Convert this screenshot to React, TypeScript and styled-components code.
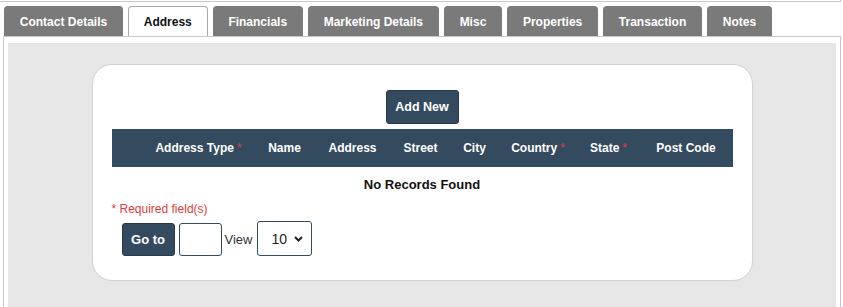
import styled, { createGlobalStyle } from "styled-components";

const Navy = "#344a5f";
const TabGrey = "#7a7a7a";
const LineGrey = "#c8c8c8";
const Red = "#e03c3c";

const GlobalStyle = createGlobalStyle`
  body {
    margin: 0;
    background: #fff;
    font-family: "Liberation Sans", Arial, sans-serif;
  }
`;

const tabs = [
  "Contact Details",
  "Address",
  "Financials",
  "Marketing Details",
  "Misc",
  "Properties",
  "Transaction",
  "Notes",
];

// widths of the grid columns, first one is an empty action column
const columns = [
  { label: "", width: 31 },
  { label: "Address Type", width: 112, required: true },
  { label: "Name", width: 60 },
  { label: "Address", width: 76 },
  { label: "Street", width: 60 },
  { label: "City", width: 48 },
  { label: "Country", width: 79, required: true },
  { label: "State", width: 62, required: true },
  { label: "Post Code", width: 93 },
];

const TopEdge = styled.div`
  width: 840px;
  height: 1px;
  border-bottom: 1px solid ${LineGrey};
  border-right: 1px solid ${LineGrey};
`;

const TabBar = styled.div`
  display: flex;
  gap: 5px;
  margin: 4px 0 0 4px;
  height: 30px;
`;

const Tab = styled.div<{ $active?: boolean }>`
  display: flex;
  align-items: center;
  padding: 0 14.8px;
  border: 1px solid ${(p) => (p.$active ? "#a8a8a8" : TabGrey)};
  border-bottom: none;
  border-radius: 4px 4px 0 0;
  background: ${(p) => (p.$active ? "#fff" : TabGrey)};
  color: ${(p) => (p.$active ? "#111" : "#fff")};
  font-size: 12px;
  font-weight: bold;
  white-space: nowrap;
`;

const Panel = styled.div`
  margin-left: 3px;
  width: 838px;
  border: 1px solid ${LineGrey};
  border-bottom: none;
  padding: 6px 4px 0;
  box-sizing: border-box;
`;

const GreyArea = styled.div`
  background: #e6e6e6;
  padding: 21px 0 26px;
  min-height: 250px;
  box-sizing: border-box;
`;

const Card = styled.div`
  width: 661px;
  margin: 0 auto;
  background: #fff;
  border: 1px solid #d2d2d2;
  border-radius: 20px;
  padding: 25px 19px 24px;
  box-sizing: border-box;
  display: flex;
  flex-direction: column;
`;

const Button = styled.button`
  background: ${Navy};
  color: #fff;
  border: 1px solid #263849;
  border-radius: 3px;
  font-family: "Liberation Sans", Arial, sans-serif;
  font-weight: bold;
  font-size: 12px;
  cursor: pointer;
  padding: 0;
`;

const AddButton = styled(Button)`
  align-self: center;
  width: 73px;
  height: 34px;
  font-size: 12.5px;
`;

const Table = styled.div`
  margin-top: 5px;
  display: grid;
  grid-template-columns: ${columns.map((c) => `${c.width}px`).join(" ")};
`;

const HeadCell = styled.div`
  background: ${Navy};
  color: #fff;
  height: 38px;
  display: flex;
  align-items: center;
  justify-content: center;
  font-size: 12px;
  font-weight: bold;
  white-space: nowrap;
`;

const Star = styled.span`
  color: ${Red};
  font-weight: normal;
  margin-left: 3px;
`;

const EmptyRow = styled.div`
  grid-column: 1 / -1;
  height: 34px;
  display: flex;
  align-items: center;
  justify-content: center;
  font-size: 13px;
  font-weight: bold;
  color: #111;
`;

const Required = styled.div`
  color: ${Red};
  font-size: 12px;
  margin-top: 1px;
  line-height: 14px;
`;

const Pager = styled.div`
  display: flex;
  align-items: flex-start;
  gap: 4px;
  margin: 5px 0 0 10px;
`;

const GoButton = styled(Button)`
  width: 53px;
  height: 33px;
  font-size: 13px;
  margin-top: 2px;
`;

const PageInput = styled.input`
  width: 43px;
  height: 33px;
  box-sizing: border-box;
  border: 1px solid ${Navy};
  border-radius: 3px;
  margin: 2px 0 0;
`;

const ViewLabel = styled.span`
  align-self: center;
  font-size: 13px;
  color: #333;
  margin: 2px 1px 0 -1px;
`;

const SelectWrap = styled.div`
  position: relative;
  width: 55px;
  height: 35px;
`;

const Select = styled.select`
  appearance: none;
  width: 100%;
  height: 100%;
  border: 1px solid ${Navy};
  border-radius: 3px;
  background: #fff;
  font-family: "Liberation Sans", Arial, sans-serif;
  font-size: 14px;
  color: #222;
  padding: 0 0 0 13px;
`;

const Chevron = styled.svg`
  position: absolute;
  right: 9px;
  top: 15px;
  pointer-events: none;
`;

function App() {
  return (
    <>
      <GlobalStyle />
      <TopEdge />
      <TabBar>
        {tabs.map((t) => (
          <Tab key={t} $active={t === "Address"}>
            {t}
          </Tab>
        ))}
      </TabBar>
      <Panel>
        <GreyArea>
          <Card>
            <AddButton>Add New</AddButton>
            <Table>
              {columns.map((c, i) => (
                <HeadCell key={i}>
                  {c.label}
                  {c.required && <Star>*</Star>}
                </HeadCell>
              ))}
              <EmptyRow>No Records Found</EmptyRow>
            </Table>
            <Required>* Required field(s)</Required>
            <Pager>
              <GoButton>Go to</GoButton>
              <PageInput />
              <ViewLabel>View</ViewLabel>
              <SelectWrap>
                <Select defaultValue="10">
                  <option>10</option>
                  <option>25</option>
                  <option>50</option>
                </Select>
                <Chevron width="9" height="6" viewBox="0 0 9 6">
                  <path d="M1 1 L4.5 4.5 L8 1" fill="none" stroke="#222" strokeWidth="2" />
                </Chevron>
              </SelectWrap>
            </Pager>
          </Card>
        </GreyArea>
      </Panel>
    </>
  );
}

export default App;
